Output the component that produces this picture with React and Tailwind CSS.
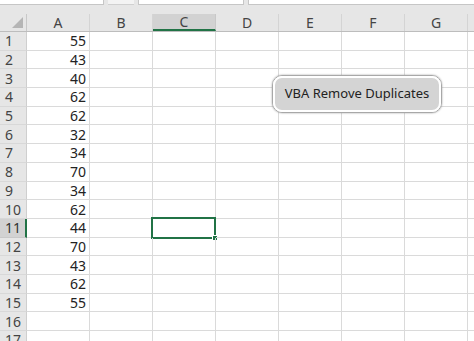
import React from "react"

const cols = ["A", "B", "C", "D", "E", "F", "G", ""]
const values = [55, 43, 40, 62, 62, 32, 34, 70, 34, 62, 44, 70, 43, 62, 55, null, null]

const Corner = () => (
  <div className="relative w-[27px] h-full shrink-0 border-r border-[#c8c8c8] bg-[#e6e6e6]">
    <svg className="absolute right-[3px] bottom-[3px]" width="11" height="11" viewBox="0 0 11 11">
      <polygon points="11,0 11,11 0,11" fill="#b5b5b5" />
    </svg>
  </div>
)

export default function App() {
  return (
    <div
      className="relative w-[474px] h-[341px] overflow-hidden bg-white text-[#333]"
      style={{ fontFamily: '"Noto Sans", "Open Sans", sans-serif' }}
    >
      {/* ribbon strip remains */}
      <div className="h-[14px] bg-[#e6e6e6] flex gap-[4px]">
        <div className="w-[104px] h-[5px] bg-white border-b border-r border-[#c6c6c6]" />
        <div className="w-[26px] h-[5px] bg-[#f3f3f3] border-b border-[#d0d0d0]" />
        <div className="w-[106px] h-[5px] bg-white border-b border-x border-[#c6c6c6]" />
        <div className="flex-1 h-[5px] bg-white border-b border-l border-[#c6c6c6]" />
      </div>

      {/* column headers */}
      <div className="flex h-[18px] bg-[#e6e6e6] border-b border-[#bdbdbd]">
        <Corner />
        {cols.map((c, i) => (
          <div
            key={i}
            className={
              c === "C"
                ? "w-[63px] shrink-0 h-full flex items-center justify-center text-[14px] bg-[#d2d2d2] border-r border-[#c8c8c8] border-b-2 border-b-[#217346] text-[#444]"
                : "w-[63px] shrink-0 h-full flex items-center justify-center text-[14px] border-r border-[#d4d4d4] text-[#444]"
            }
          >
            {c}
          </div>
        ))}
      </div>

      {/* rows */}
      {values.map((v, r) => (
        <div key={r} className="flex h-[18.7px]">
          <div
            className={
              r === 10
                ? "w-[27px] shrink-0 h-full flex items-center pl-[5px] text-[14px] bg-[#d2d2d2] border-r-2 border-[#217346] border-b border-b-[#c8c8c8] text-[#333]"
                : "w-[27px] shrink-0 h-full flex items-center pl-[5px] text-[14px] bg-[#e6e6e6] border-r border-[#cfcfcf] border-b border-b-[#d8d8d8] text-[#444]"
            }
          >
            {r + 1}
          </div>
          {cols.map((c, i) => (
            <div
              key={i}
              className="relative w-[63px] shrink-0 h-full border-r border-b border-[#dadada] flex items-center justify-end pr-[3px] text-[14px] text-[#222]"
            >
              {i === 0 && v !== null ? v : null}
              {r === 10 && c === "C" && (
                <div className="absolute left-[-2px] top-[-2px] w-[65px] h-[22px] border-2 border-[#217346]">
                  <div className="absolute right-[-4px] bottom-[-4px] w-[6px] h-[6px] bg-[#217346] border border-white" />
                </div>
              )}
            </div>
          ))}
        </div>
      ))}

      {/* macro button */}
      <div className="absolute left-[272px] top-[75px] w-[170px] h-[38px] rounded-[10px] border border-[#a8a8a8] shadow-[0_0_2px_#999]">
        <div className="w-full h-full rounded-[9px] border-2 border-white bg-[#d4d4d4] flex items-center justify-center text-[13px] text-[#222]">
          VBA Remove Duplicates
        </div>
      </div>
    </div>
  )
}
